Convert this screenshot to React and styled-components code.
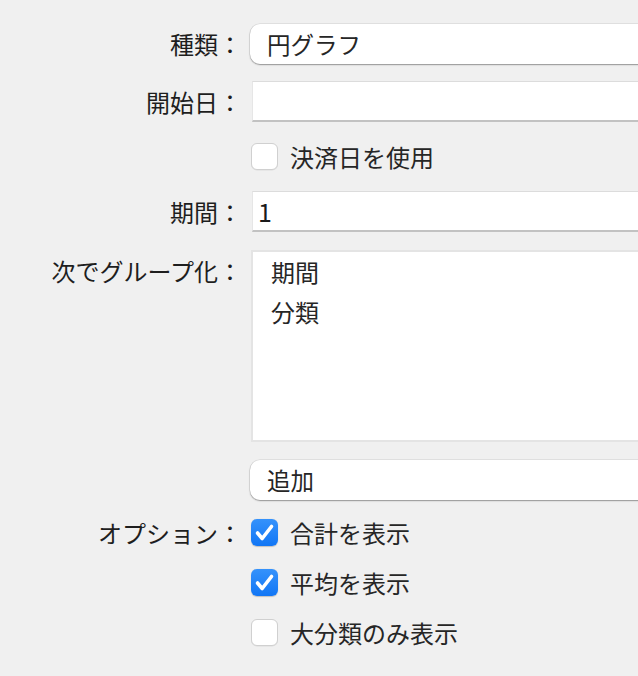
import React from "react";
import styled, { createGlobalStyle } from "styled-components";

const GlobalStyle = createGlobalStyle`
  html, body {
    margin: 0;
    padding: 0;
    background: #f0f0f0;
    overflow: hidden;
  }
  body {
    font-family: "Noto Sans CJK JP", "Noto Sans", sans-serif;
    color: #222;
  }
`;

const Form = styled.div`
  width: 638px;
  height: 676px;
  padding-top: 24px;
  box-sizing: border-box;
  overflow: hidden;
`;

const Row = styled.div`
  display: flex;
  align-items: ${(p) => (p.$top ? "flex-start" : "center")};
  margin-top: ${(p) => p.$mt || 0}px;
  height: ${(p) => p.$h}px;
`;

const Label = styled.div`
  width: 242px;
  flex: none;
  text-align: right;
  font-size: 24px;
  line-height: 30px;
  color: #1e1e1e;
  padding-top: ${(p) => p.$pt || 0}px;
  margin-right: 8px;
  white-space: nowrap;
`;

const Popup = styled.div`
  width: 440px;
  height: 40px;
  flex: none;
  box-sizing: border-box;
  background: #fff;
  border-radius: 10px;
  box-shadow: 0 1px 1.5px rgba(0, 0, 0, 0.35), 0 0 0 0.5px rgba(0, 0, 0, 0.12);
  display: flex;
  align-items: center;
  padding-left: 17px;
  font-size: 23.5px;
  color: #262626;
`;

const TextField = styled.div`
  width: 440px;
  height: 41px;
  flex: none;
  margin-left: 2px;
  box-sizing: border-box;
  background: #fff;
  border-top: 1px solid #dcdcdc;
  border-left: 1px solid #e6e6e6;
  border-bottom: 2px solid #c2c2c2;
  display: flex;
  align-items: center;
  padding-left: 5px;
  font-size: 25px;
  color: #1a1a1a;
`;

const ListBox = styled.div`
  width: 440px;
  height: 192px;
  flex: none;
  margin-left: 1px;
  box-sizing: border-box;
  background: #fff;
  border: 2px solid #e4e4e4;
  padding: 0 0 0 18px;
`;

const ListItem = styled.div`
  font-size: 24px;
  line-height: 40px;
  color: #262626;
`;

const CheckRow = styled.label`
  display: flex;
  align-items: center;
  gap: 12px;
  font-size: 24px;
  color: #262626;
  margin-left: 1px;
`;

const Box = styled.span`
  width: 27px;
  height: 27px;
  flex: none;
  box-sizing: border-box;
  border-radius: 6px;
  display: flex;
  align-items: center;
  justify-content: center;
  background: ${(p) => (p.$on ? "linear-gradient(#3592fb, #1176f5)" : "#fff")};
  border: ${(p) => (p.$on ? "none" : "1px solid #d0d0d0")};
  box-shadow: ${(p) => (p.$on ? "0 0.5px 1px rgba(0,0,0,0.2)" : "0 0.5px 0.5px rgba(0,0,0,0.08)")};
`;

const Check = ({ on, children }) => (
  <CheckRow>
    <Box $on={on}>
      {on && (
        <svg width="27" height="27" viewBox="0 0 27 27">
          <path
            d="M6.5 14 L11.2 19.5 L20.5 7.5"
            fill="none"
            stroke="#fff"
            strokeWidth="3.6"
            strokeLinecap="round"
            strokeLinejoin="round"
          />
        </svg>
      )}
    </Box>
    {children}
  </CheckRow>
);

export default function App() {
  return (
    <>
      <GlobalStyle />
      <Form>
        <Row $h={40}>
          <Label>種類：</Label>
          <Popup>円グラフ</Popup>
        </Row>
        <Row $h={41} $mt={17}>
          <Label>開始日：</Label>
          <TextField />
        </Row>
        <Row $h={27} $mt={21}>
          <Label />
          <Check>決済日を使用</Check>
        </Row>
        <Row $h={41} $mt={21}>
          <Label>期間：</Label>
          <TextField>1</TextField>
        </Row>
        <Row $h={192} $mt={18} $top>
          <Label $pt={6}>次でグループ化：</Label>
          <ListBox>
            <ListItem>期間</ListItem>
            <ListItem>分類</ListItem>
          </ListBox>
        </Row>
        <Row $h={40} $mt={18}>
          <Label />
          <Popup>追加</Popup>
        </Row>
        <Row $h={27} $mt={19}>
          <Label>オプション：</Label>
          <Check on>合計を表示</Check>
        </Row>
        <Row $h={27} $mt={23}>
          <Label />
          <Check on>平均を表示</Check>
        </Row>
        <Row $h={27} $mt={23}>
          <Label />
          <Check>大分類のみ表示</Check>
        </Row>
      </Form>
    </>
  );
}
